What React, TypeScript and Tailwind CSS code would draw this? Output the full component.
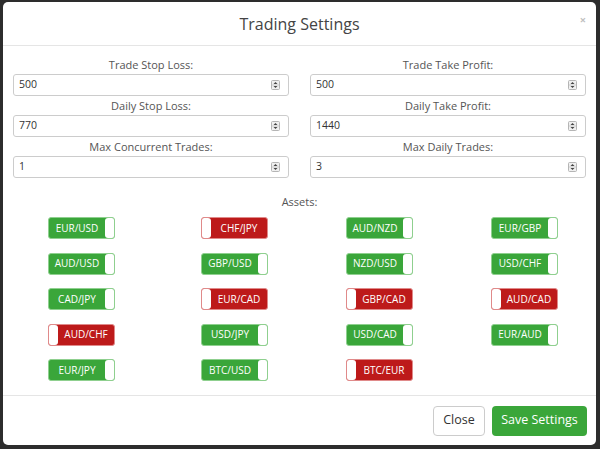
import React from "react";

const fields: [string, string][] = [
  ["Trade Stop Loss:", "500"],
  ["Trade Take Profit:", "500"],
  ["Daily Stop Loss:", "770"],
  ["Daily Take Profit:", "1440"],
  ["Max Concurrent Trades:", "1"],
  ["Max Daily Trades:", "3"],
];

const assets: [string, boolean][] = [
  ["EUR/USD", true],
  ["CHF/JPY", false],
  ["AUD/NZD", true],
  ["EUR/GBP", true],
  ["AUD/USD", true],
  ["GBP/USD", true],
  ["NZD/USD", true],
  ["USD/CHF", true],
  ["CAD/JPY", true],
  ["EUR/CAD", false],
  ["GBP/CAD", false],
  ["AUD/CAD", false],
  ["AUD/CHF", false],
  ["USD/JPY", true],
  ["USD/CAD", true],
  ["EUR/AUD", true],
  ["EUR/JPY", true],
  ["BTC/USD", true],
  ["BTC/EUR", false],
];

function Spinner() {
  return (
    <svg width="9" height="10" viewBox="0 0 9 10" className="shrink-0">
      <rect x="0.5" y="0.5" width="8" height="9" rx="1" fill="#f0f0f0" stroke="#b5b5b5" />
      <path d="M2.5 4 L4.5 2 L6.5 4 Z" fill="#444" />
      <path d="M2.5 6 L4.5 8 L6.5 6 Z" fill="#444" />
      <line x1="1" y1="5" x2="8" y2="5" stroke="#b5b5b5" strokeWidth="0.6" />
    </svg>
  );
}

function NumberField({ label, value }: { label: string; value: string }) {
  return (
    <div className="flex flex-col">
      <div className="h-[19px] leading-[19px] text-center text-[11px] text-[#555]">{label}</div>
      <div className="h-[22px] flex items-center justify-between border border-[#ccc] rounded-[3px] bg-white pl-[5px] pr-[8px] text-[10.5px] text-[#333]">
        <span>{value}</span>
        <Spinner />
      </div>
    </div>
  );
}

function Toggle({ name, on }: { name: string; on: boolean }) {
  return (
    <div
      className={
        on
          ? "w-[67px] h-[22px] flex items-stretch rounded-[3px] border border-[#8fd08f] bg-[#3aa63a]"
          : "w-[67px] h-[22px] flex items-stretch rounded-[3px] border border-[#e08a8a] bg-[#bd1a1a]"
      }
    >
      {!on && <div className="w-[9px] bg-white rounded-l-[2px] rounded-r-[3px]" />}
      <div className="flex-1 flex items-center justify-center text-[10px] text-white">{name}</div>
      {on && <div className="w-[9px] bg-white rounded-r-[2px] rounded-l-[3px]" />}
    </div>
  );
}

export default function App() {
  return (
    <div
      className="w-[600px] h-[449px] bg-[#2d2d2d] pt-[2px] pl-[3px] pr-[4px] pb-[4px]"
      style={{ fontFamily: '"Open Sans", "Noto Sans", sans-serif' }}
    >
      <div className="h-full flex flex-col bg-white rounded-[5px] overflow-hidden">
        <div className="relative h-[44px] shrink-0 flex items-center justify-center border-b border-[#e5e5e5]">
          <span className="text-[16px] text-[#444]">Trading Settings</span>
          <span className="absolute right-[10px] top-[10px] text-[11px] font-bold text-[#c0c0c0]">×</span>
        </div>
        <div className="flex-1 px-[10px] pt-[9px]">
          <div className="grid grid-cols-2 gap-x-[21px]">
            {fields.map(([l, v]) => (
              <NumberField key={l} label={l} value={v} />
            ))}
          </div>
          <div className="mt-[16px] h-[16px] leading-[16px] text-center text-[11px] text-[#555]">Assets:</div>
          <div className="mt-[7px] pl-[35px] grid grid-cols-[153px_145px_145px_67px] gap-y-[13.5px]">
            {assets.map(([n, on]) => (
              <Toggle key={n} name={n} on={on} />
            ))}
          </div>
        </div>
        <div className="h-[50px] shrink-0 flex items-center justify-end gap-[7px] pr-[9px] border-t border-[#e5e5e5]">
          <div className="w-[52px] h-[30px] flex items-center justify-center rounded-[4px] border border-[#ccc] text-[12.5px] text-[#333]">
            Close
          </div>
          <div className="w-[95px] h-[30px] flex items-center justify-center rounded-[4px] bg-[#3aa63a] text-[12.5px] text-white">
            Save Settings
          </div>
        </div>
      </div>
    </div>
  );
}
